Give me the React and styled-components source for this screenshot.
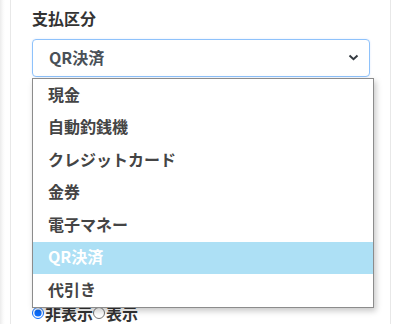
import React from 'react';
import styled, { createGlobalStyle } from 'styled-components';

const GlobalStyle = createGlobalStyle`
  body {
    margin: 0;
    background: #fff;
    font-family: "Noto Sans CJK JP", "Noto Sans", sans-serif;
  }
`

const Page = styled.div`
  height: 324px;
  overflow: hidden;
  padding-left: 10px;
  background: linear-gradient(to right, #ececec 0, #fafafa 3px, #fff 5px);
`

const Card = styled.div`
  width: 381px;
  height: 100%;
  box-sizing: border-box;
  background: #fff;
  border-left: 1px solid #e8e8e8;
  border-right: 1px solid #e8e8e8;
  padding: 6px 20px 0 21px;
`

const FieldGroup = styled.div`
  position: relative;
  display: flex;
  flex-direction: column;
`

const Label = styled.label`
  font-size: 16px;
  line-height: 24px;
  font-weight: 700;
  color: #333;
  margin-bottom: 9px;
`

const SelectBox = styled.div`
  display: flex;
  align-items: center;
  justify-content: space-between;
  height: 38px;
  box-sizing: border-box;
  padding: 0 10px 2px 16px;
  border: 1px solid #8ec2fb;
  border-radius: 4px;
  box-shadow: 0 0 2px rgba(13, 110, 253, 0.15);
  font-size: 16px;
  font-weight: 700;
  color: #495057;
`

const DropList = styled.ul`
  position: absolute;
  top: 72px;
  left: 0;
  width: 340px;
  margin: 0;
  padding: 0;
  list-style: none;
  background: #fff;
  border: 1px solid #8c8c8c;
  box-shadow: 2px 3px 6px rgba(0, 0, 0, 0.22);
  z-index: 2;
`

const DropItem = styled.li`
  display: flex;
  align-items: center;
  height: 32.5px;
  box-sizing: border-box;
  padding: 0 0 3px 15px;
  font-size: 16px;
  font-weight: 700;
  color: ${p => (p.$active ? '#fff' : '#444')};
  background: ${p => (p.$active ? '#ade0f5' : 'transparent')};
`

const Hidden = styled.div`
  height: 227px;
`

const RadioRow = styled.div`
  display: flex;
  align-items: center;
  font-size: 16px;
  font-weight: 700;
  color: #333;
  line-height: 18px;
`

const Radio = styled.input.attrs({ type: 'radio', name: 'disp' })`
  width: 12px;
  height: 12px;
  margin: 0 1px 0 0;
  accent-color: #0d6efd;
`

const Chevron = () => (
  <svg width="11" height="7" viewBox="0 0 11 7">
    <path d="M1.5 1.5 L5.5 5.2 L9.5 1.5" fill="none" stroke="#343a40" strokeWidth="2" />
  </svg>
)

const options = ['現金', '自動釣銭機', 'クレジットカード', '金券', '電子マネー', 'QR決済', '代引き']

export default function App() {
  return (
    <Page>
      <GlobalStyle />
      <Card>
        <FieldGroup>
          <Label>支払区分</Label>
          <SelectBox>
            <span>QR決済</span>
            <Chevron />
          </SelectBox>
          <DropList>
            {options.map(o => (
              <DropItem key={o} $active={o === 'QR決済'}>{o}</DropItem>
            ))}
          </DropList>
        </FieldGroup>
        <Hidden />
        <RadioRow>
          <Radio defaultChecked />
          <span>非表示</span>
          <Radio />
          <span>表示</span>
        </RadioRow>
      </Card>
    </Page>
  );
}
